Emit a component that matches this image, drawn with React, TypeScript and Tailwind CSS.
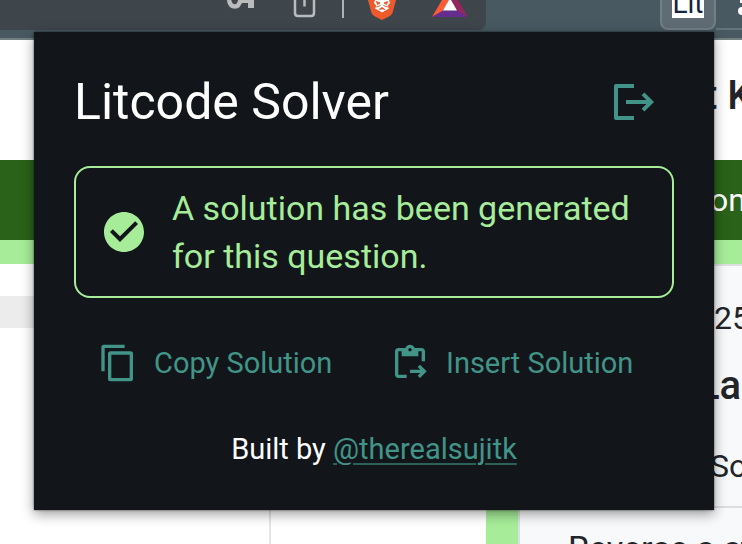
import React from "react";

function KeyIcon() {
  return (
    <svg className="h-[10px] w-[30px] shrink-0" viewBox="0 0 30 10" aria-hidden="true">
      <path d="M3 0Q4 6.500 9 6.500Q13 6.500 14.500 0" fill="none" stroke="#b9bbbd" strokeWidth="4.500" />
      <path d="M13 0H28V8H22V3H13Z" fill="#b9bbbd" />
    </svg>
  );
}

function ShareIcon() {
  return (
    <svg className="h-[18px] w-[24px] shrink-0" viewBox="0 0 24 18" aria-hidden="true">
      <path d="M2 0V13Q2 16 5 16H18Q21 16 21 13V0M11.500 0V6.500" fill="none" stroke="#b9bbbd" strokeWidth="2.500" />
    </svg>
  );
}

function ShieldIcon() {
  return (
    <svg className="h-[20px] w-[30px] shrink-0" viewBox="0 0 30 20" aria-hidden="true">
      <path d="M1 0H29L25.500 13Q24.500 15 22 16.500L15 20L8 16.500Q5.500 15 4.500 13Z" fill="#f0592b" />
      <path d="M8 0H22L23 3L20.500 6L22 8.500L15 12.500L8 8.500L9.500 6L7 3Z" fill="#fff" />
      <path d="M9.500 1.500L13 3L10.500 4.500ZM20.500 1.500L17 3L19.500 4.500ZM9.500 7L13.500 5.500M20.500 7L16.500 5.500M12 9.500L15 7.500L18 9.500" fill="#f0592b" stroke="#f0592b" strokeWidth="1" />
    </svg>
  );
}

function TriangleIcon() {
  return (
    <svg className="h-[17px] w-[36px] shrink-0" viewBox="0 0 36 17" aria-hidden="true">
      <path d="M10 0H18L11 11L0 17Z" fill="#fb5c33" />
      <path d="M26 0H18L25 11L36 17Z" fill="#93285f" />
      <path d="M0 17L11 10.500H25L36 17Z" fill="#662d91" />
      <path d="M17 0H19L25 10.500H11Z" fill="#fff" />
    </svg>
  );
}

function LogoutIcon() {
  return (
    <svg className="size-12" viewBox="0 0 24 24" fill="currentColor" aria-hidden="true">
      <path d="M13 3v2H5v14h8v2H4q-1 0-1-1V4q0-1 1-1z" />
      <path d="M9 11h10.200l-2.400-2.400 1.400-1.400L23 12l-4.800 4.800-1.400-1.400 2.400-2.400H9z" />
    </svg>
  );
}

function CheckIcon() {
  return (
    <svg className="size-12 shrink-0" viewBox="0 0 24 24" fill="currentColor" aria-hidden="true">
      <path d="M12 2C6.480 2 2 6.480 2 12s4.480 10 10 10 10-4.480 10-10S17.520 2 12 2zm-2 15l-5-5 1.410-1.410L10 14.170l7.590-7.590L19 8l-9 9z" />
    </svg>
  );
}

function CopyIcon() {
  return (
    <svg className="size-10 shrink-0" viewBox="0 0 24 24" fill="currentColor" aria-hidden="true">
      <path d="M16 1H3.500Q2 1 2 2.500V17h2V3h12zM19.500 5h-12Q6 5 6 6.500v15Q6 23 7.500 23h12q1.500 0 1.500-1.500v-15Q21 5 19.500 5zM19 21H8V7h11z" />
    </svg>
  );
}

function PasteIcon() {
  return (
    <svg className="size-10 shrink-0" viewBox="0 0 24 24" fill="currentColor" aria-hidden="true">
      <path d="M5 5h2v3h10V5h2v6h2V5c0-1.100-.9-2-2-2h-4.180C14.400 1.840 13.300 1 12 1s-2.400.84-2.820 2H5c-1.100 0-2 .9-2 2v14c0 1.100.9 2 2 2h5v-2H5V5zm7-2c.55 0 1 .45 1 1s-.45 1-1 1-1-.45-1-1 .45-1 1-1z" />
      <path d="M18.010 13l-1.420 1.410 1.580 1.580H12v2h6.170l-1.580 1.590 1.420 1.410 3.990-4z" />
    </svg>
  );
}

function Toolbar() {
  return (
    <header className="flex h-10 items-start border-b-2 border-[#737f81] bg-[#485961]">
      <div className="flex h-[30px] flex-1 items-start justify-end rounded-br-lg bg-[#3e454b] pr-[18px]">
        <KeyIcon />
        <div className="ml-[37px]"><ShareIcon /></div>
        <div className="ml-[25px] h-[18px] w-[2px] bg-[#b0b3b5]" />
        <div className="ml-[23px]"><ShieldIcon /></div>
        <div className="ml-[35px]"><TriangleIcon /></div>
      </div>
      <div className="flex h-[30px] w-[256px] items-start pl-[174px]">
        <div className="flex h-[30px] w-[56px] justify-center rounded-b-lg border-2 border-t-0 border-[#737f85] bg-[#606c73]">
          <div className="flex h-[18px] w-8 items-end justify-center overflow-hidden bg-white text-[28px] leading-7 text-[#15233c]">
            Lit
          </div>
        </div>
        <div className="flex h-[30px] flex-1 justify-end overflow-hidden border-b-2 border-[#65737a]">
          <svg className="h-[16px] w-[4px]" viewBox="0 0 4 16" aria-hidden="true">
            <path d="M4 0H2V3H4ZM4 7Q0 7 0 11Q0 15 4 15Z" fill="#fff" />
          </svg>
        </div>
      </div>
    </header>
  );
}

function Page() {
  return (
    <main className="flex min-h-0 flex-1 flex-col bg-white">
      <div className="flex h-[120px] shrink-0 items-center justify-end">
        <div className="w-[38px] whitespace-nowrap pb-2 text-[40px] font-medium leading-[48px] text-[#212429]">t K</div>
      </div>
      <div className="flex h-20 shrink-0 items-center justify-end bg-[#2a6219]">
        <div className="w-[32px] whitespace-nowrap text-[32px] leading-10 text-white">on</div>
      </div>
      <div className="h-6 shrink-0 bg-[#a7ed99]" />
      <div className="flex min-h-0 flex-1">
        <div className="w-[271px] border-r-2 border-[#e5e5e5] pt-8">
          <div className="h-8 bg-[#ececec]" />
        </div>
        <div className="flex-1" />
        <div className="w-8 bg-[#a7ed99]" />
        <section className="flex w-[224px] flex-col overflow-hidden border-l-2 border-t-2 border-[#dddee2] bg-[#f7f9fb] text-[#212429]">
          <div className="flex shrink-0 flex-col items-end pt-8">
            <p className="w-7 text-[32px] leading-10">25</p>
            <p className="mt-6 w-[44px] text-[40px] font-medium leading-[48px]">La</p>
            <p className="mt-9 w-8 text-[32px] leading-10">So</p>
          </div>
          <p className="mt-5 shrink-0 whitespace-nowrap border-t-2 border-[#dddee2] pl-12 pt-5 text-[34px] leading-10">
            Reverse a st
          </p>
        </section>
      </div>
    </main>
  );
}

function Popup() {
  return (
    <aside className="absolute left-[34px] right-7 top-8 bg-[#12161a] px-10 pb-[41px] pt-[46px] text-white shadow-[0_4px_12px_rgba(0,0,0,0.4),0_0_2px_rgba(0,0,0,0.6)]">
      <div className="flex h-12 items-center justify-between pr-[18px]">
        <h1 className="text-[50px] leading-[48px]">Litcode Solver</h1>
        <button type="button" aria-label="Log out" className="text-[#429488]">
          <LogoutIcon />
        </button>
      </div>
      <div role="status" className="mt-10 flex items-center gap-6 rounded-2xl border-2 border-[#a7ed99] py-4 pl-6 pr-4 text-[34px] leading-[48px] text-[#a7ed99]">
        <CheckIcon />
        <p>
          A solution has been generated
          <br />
          for this question.
        </p>
      </div>
      <div className="mt-[45px] grid grid-cols-[292px_1fr] pl-6 text-[29px] leading-10 text-[#429488]">
        <button type="button" className="flex items-center gap-4 whitespace-nowrap">
          <CopyIcon />
          Copy Solution
        </button>
        <button type="button" className="flex items-center gap-4 whitespace-nowrap">
          <PasteIcon />
          Insert Solution
        </button>
      </div>
      <p className="mt-[46px] text-center text-[29px] leading-10">
        Built by{" "}
        <a href="#profile" className="text-[#429488] underline decoration-[#2b6159] decoration-2 underline-offset-4">
          @therealsujitk
        </a>
      </p>
    </aside>
  );
}

export default function App() {
  return (
    <div className="relative flex h-screen flex-col overflow-hidden font-['Roboto',sans-serif]">
      <Toolbar />
      <Page />
      <Popup />
    </div>
  );
}
